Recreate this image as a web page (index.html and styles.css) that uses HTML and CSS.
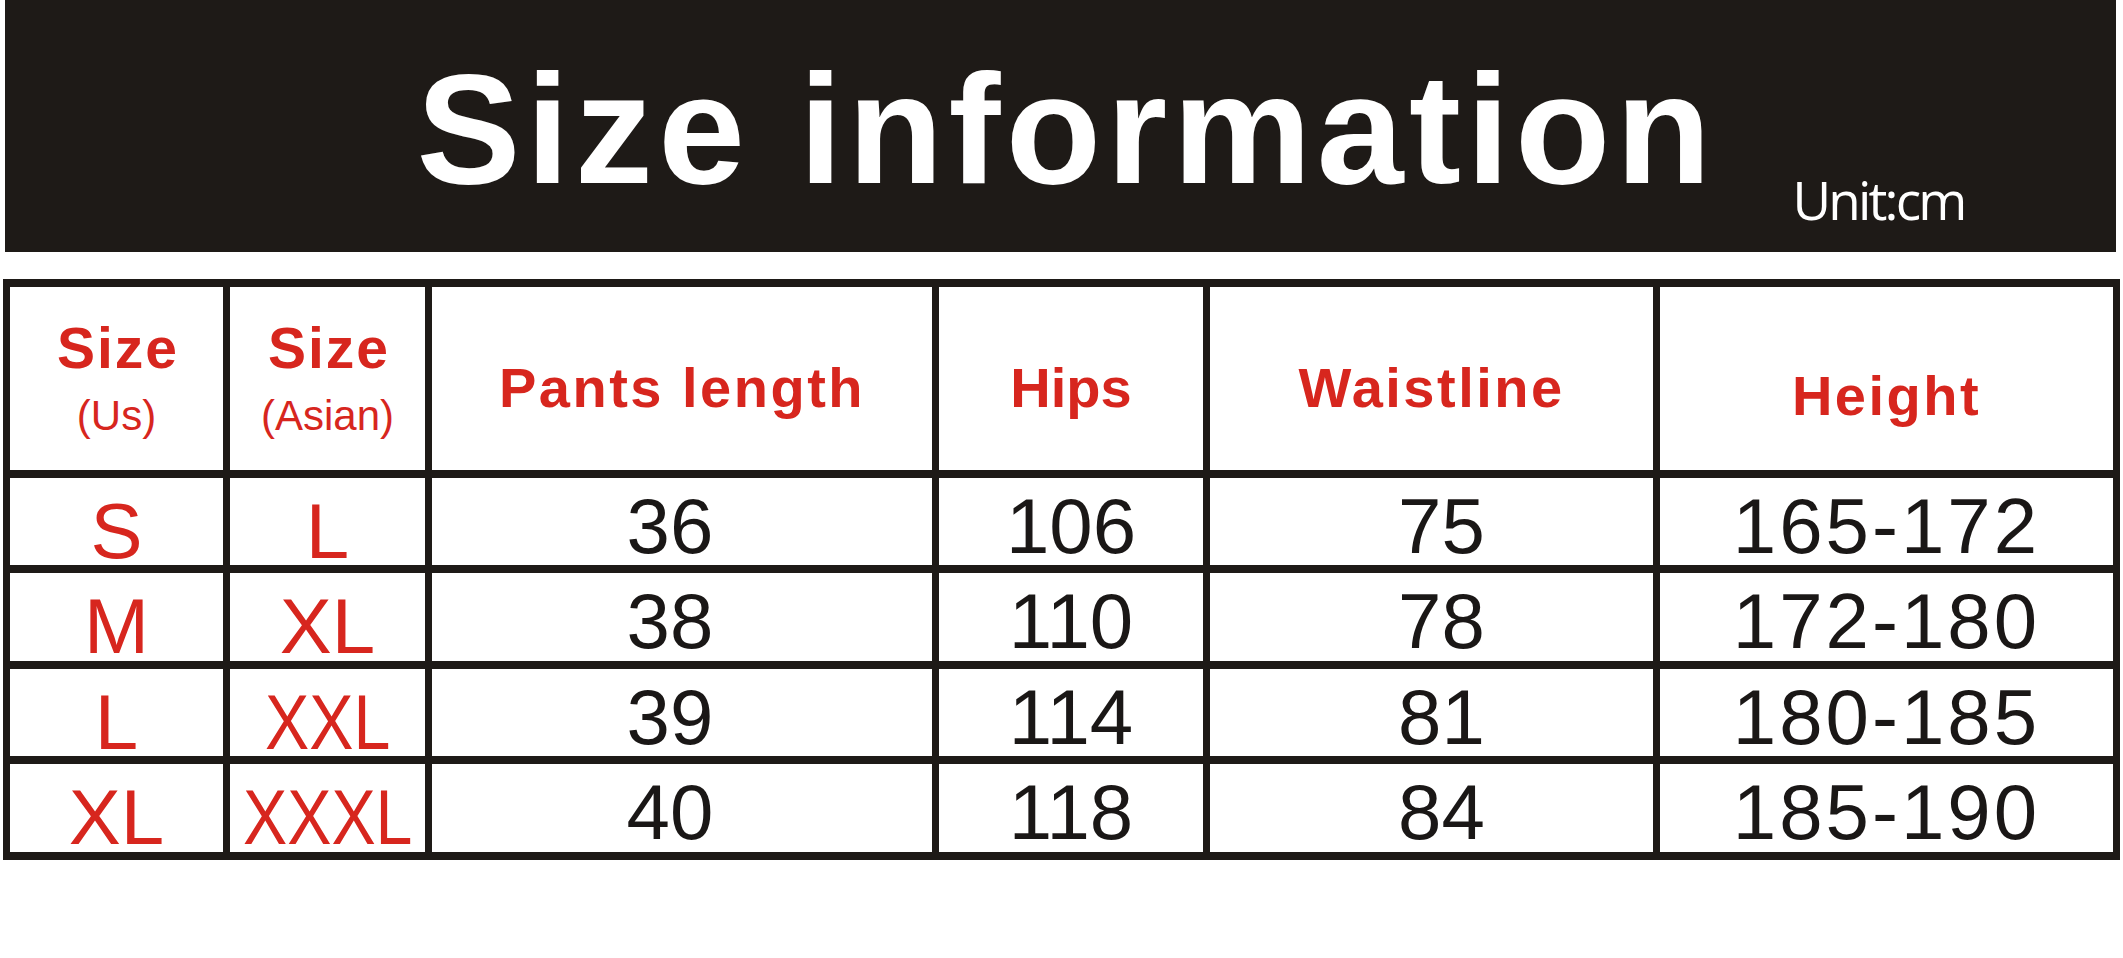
FILE: index.html
```html
<!DOCTYPE html>
<html lang="en">
<head>
<meta charset="utf-8">
<title>Size information</title>
<link rel="stylesheet" href="styles.css">
</head>
<body>
<header class="banner">
  <div class="banner-side"></div>
  <h1 class="title">Size information</h1>
  <div class="banner-side"><span class="unit">Unit:cm</span></div>
</header>
<main class="chart">
  <div class="cell head head-double"><span class="hd">Size</span><span class="sub">(Us)</span></div>
  <div class="cell head head-double"><span class="hd">Size</span><span class="sub">(Asian)</span></div>
  <div class="cell head head-single"><span class="hd spaced">Pants length</span></div>
  <div class="cell head head-single"><span class="hd">Hips</span></div>
  <div class="cell head head-single"><span class="hd spaced">Waistline</span></div>
  <div class="cell head head-single low"><span class="hd spaced">Height</span></div>

  <div class="cell red">S</div>
  <div class="cell red">L</div>
  <div class="cell num c3">36</div>
  <div class="cell num">106</div>
  <div class="cell num c5">75</div>
  <div class="cell num range">165-172</div>

  <div class="cell red">M</div>
  <div class="cell red">XL</div>
  <div class="cell num c3">38</div>
  <div class="cell num">110</div>
  <div class="cell num c5">78</div>
  <div class="cell num range">172-180</div>

  <div class="cell red">L</div>
  <div class="cell red"><span class="narrow">XXL</span></div>
  <div class="cell num c3">39</div>
  <div class="cell num">114</div>
  <div class="cell num c5">81</div>
  <div class="cell num range">180-185</div>

  <div class="cell red">XL</div>
  <div class="cell red"><span class="narrow">XXXL</span></div>
  <div class="cell num c3">40</div>
  <div class="cell num">118</div>
  <div class="cell num c5">84</div>
  <div class="cell num range">185-190</div>
</main>
</body>
</html>
```
FILE: styles.css
```css
html, body {
  margin: 0;
  padding: 0;
  background: #ffffff;
}

body {
  font-family: "Liberation Sans", Arial, sans-serif;
}

.banner {
  display: grid;
  grid-template-columns: 1fr auto 1fr;
  align-items: start;
  width: 2111px;
  height: 252px;
  margin-left: 5px;
  background: #1e1a17;
  box-sizing: border-box;
  padding-top: 51px;
}

.title {
  margin: 0;
  padding-left: 12px;
  color: #ffffff;
  font-family: "Liberation Sans", Arial, sans-serif;
  font-weight: bold;
  font-size: 156px;
  line-height: 1;
  letter-spacing: 5.4px;
  white-space: nowrap;
}

.banner-side {
  display: flex;
}

.unit {
  margin-top: 122px;
  padding-left: 76px;
  color: #ffffff;
  font-family: "Open Sans", "Noto Sans", sans-serif;
  font-size: 53px;
  line-height: 1;
  letter-spacing: -2.8px;
  white-space: nowrap;
}

.chart {
  display: grid;
  grid-template-columns: 213px 195px 500px 264px 443px 453px;
  grid-template-rows: 183px 87px 88px 87px 88px;
  gap: 8px 7px;
  padding: 8px 7px;
  width: max-content;
  margin: 27px 0 0 3px;
  background: #1e1a17;
}

.cell {
  display: flex;
  flex-direction: column;
  align-items: center;
  justify-content: center;
  background: #ffffff;
  box-sizing: border-box;
  white-space: nowrap;
}

.head {
  color: #d7261e;
}

.hd {
  font-weight: bold;
  font-size: 56px;
  line-height: 1;
}

.head-double .hd {
  font-size: 57px;
  letter-spacing: 2px;
  padding-left: 3px;
}

.spaced {
  letter-spacing: 2.5px;
}

.sub {
  margin-top: 18px;
  font-size: 42px;
  line-height: 1;
}

.head-single {
  padding-top: 18px;
}

.head-single.low {
  padding-top: 34px;
}

.red {
  color: #d7261e;
  font-size: 78px;
  line-height: 1;
  padding-top: 18px;
}

.narrow {
  display: inline-block;
  transform: scaleX(0.85);
}

.num {
  color: #1a1716;
  font-size: 78px;
  line-height: 1;
  padding-top: 8px;
}

.c3 {
  padding-right: 24px;
}

.c5 {
  padding-left: 20px;
}

.range {
  letter-spacing: 3px;
}
```
